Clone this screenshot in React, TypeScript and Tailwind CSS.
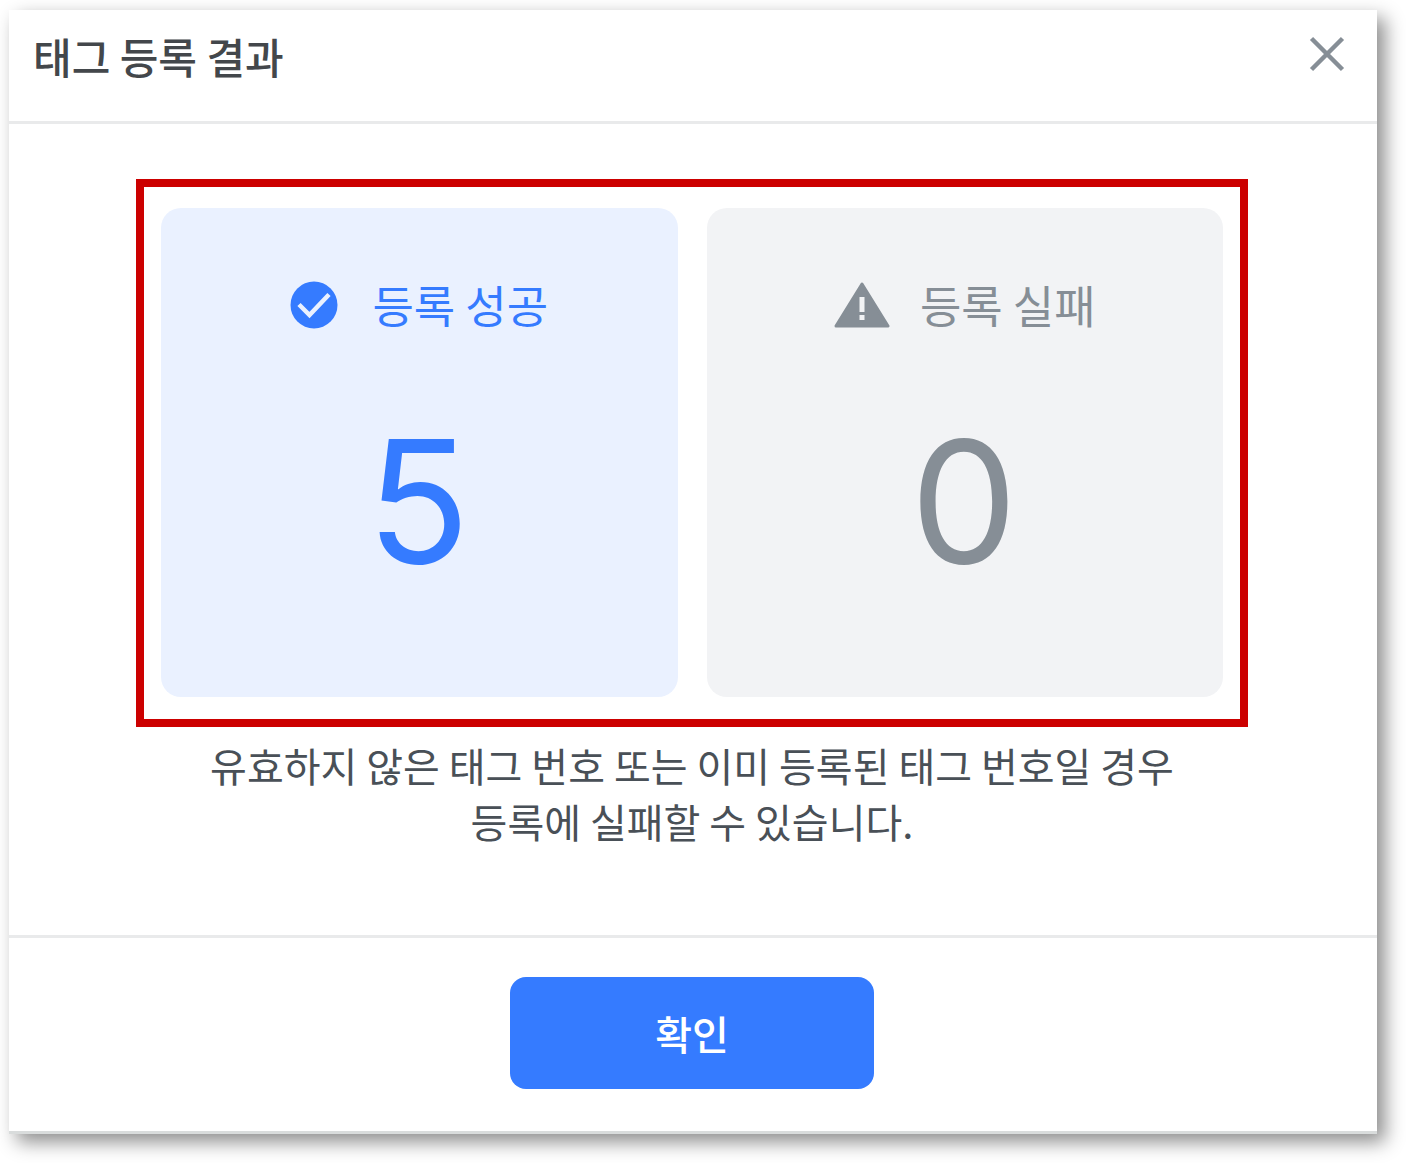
import React from 'react';

const ResultCard = ({ label, count, className, icon }: { label: string; count: number; className: string; icon: React.ReactNode }) => (
    <div className={`flex h-[489px] flex-1 flex-col items-center rounded-[20px] pt-[65px] ${className}`}>
        <div className="flex h-16 items-center gap-[30px]">
            {icon}
            <span className="text-[45px] leading-[64px]">{label}</span>
        </div>
        <span className="mt-[61px] pr-[2px] font-['Inter'] text-[170px] leading-[206px]">{count}</span>
    </div>
);

const App = () => {
    return (
        <div className="min-h-screen bg-white pt-[10px] pr-[29px] pb-[29px] pl-[9px] font-['Noto_Sans_CJK_KR','Noto_Sans',sans-serif]">
            <section role="dialog" aria-labelledby="dialog-title" className="border-b-[3px] border-[#d9dcdc] bg-white shadow-[8px_8px_18px_0_rgba(0,0,0,0.45)]">
                {/* Header */}
                <header className="flex h-[114px] items-start justify-between border-b-[3px] border-[#e9eaeb] pt-[18px] pr-8 pl-6">
                    <h1 id="dialog-title" className="text-[42px] leading-[56px] font-medium text-[#43474b]">태그 등록 결과</h1>
                    <button type="button" aria-label="닫기" className="mt-2 text-[#868e96]">
                        <svg viewBox="0 0 36 36" className="size-9" fill="none" stroke="currentColor" strokeWidth="4.5">
                            <path d="M2.5 2.5 33.5 33.5M33.5 2.5 2.5 33.5" />
                        </svg>
                    </button>
                </header>

                {/* Results */}
                <main className="h-[814px] border-b-[3px] border-[#e9eaeb] pt-[55px] pr-[129px] pl-[127px]">
                    <div className="flex gap-[29px] border-8 border-[#cc0000] px-[17px] pt-[21px] pb-[22px]">
                        <ResultCard
                            label="등록 성공"
                            count={5}
                            className="bg-[#eaf1ff] text-[#357bff]"
                            icon={
                                <svg viewBox="0 0 48 48" className="mr-1 size-12" fill="none" aria-hidden="true">
                                    <circle cx="24" cy="24" r="23.5" fill="currentColor" />
                                    <path d="M9 23.5 19.5 34 39 13.5" stroke="#eaf1ff" strokeWidth="4.5" />
                                </svg>
                            }
                        />
                        <ResultCard
                            label="등록 실패"
                            count={0}
                            className="bg-[#f2f3f5] text-[#868e96]"
                            icon={
                                <svg viewBox="0 0 56 46" className="h-[46px] w-14" fill="none" aria-hidden="true">
                                    <path d="M28 2 54 44H2z" fill="currentColor" stroke="currentColor" strokeWidth="3" strokeLinejoin="round" />
                                    <path d="M28 15v15M28 33v5" stroke="#f2f3f5" strokeWidth="5" />
                                </svg>
                            }
                        />
                    </div>
                    <p className="mt-[10px] text-center text-[40px] leading-[56px] text-[#495057]">
                        유효하지 않은 태그 번호 또는 이미 등록된 태그 번호일 경우
                        <br />
                        등록에 실패할 수 있습니다.
                    </p>
                </main>

                {/* Footer */}
                <footer className="flex h-[193px] items-start justify-center pt-[39px] pr-[2px]">
                    <button type="button" className="h-28 w-[364px] rounded-2xl bg-[#357bff] text-[40px] font-medium text-white">확인</button>
                </footer>
            </section>
        </div>
    );
};

export default App;
